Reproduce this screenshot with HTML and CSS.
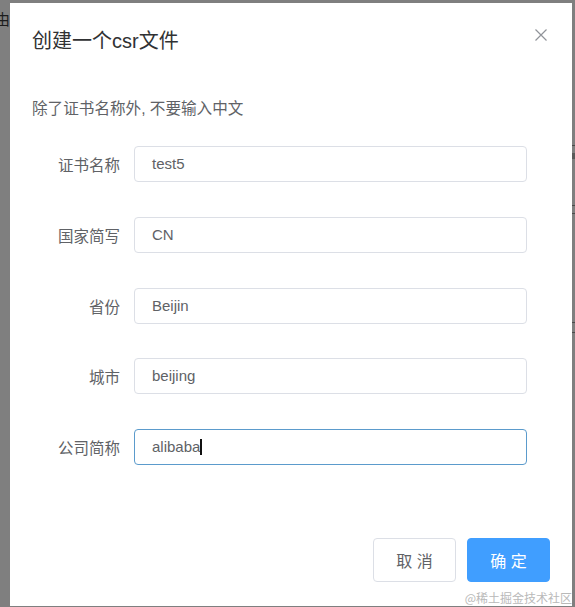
FILE: index.html
```html
<!DOCTYPE html>
<html lang="zh-CN">
<head>
<meta charset="utf-8">
<title>创建一个csr文件</title>
<link rel="stylesheet" href="styles.css">
</head>
<body>
<div class="backdrop-text">由</div>
<div class="bg-marks">
  <span class="mark m1"></span>
  <span class="mark m2"></span>
  <span class="mark m3"></span>
  <span class="mark m4"></span>
  <span class="mark m5"></span>
  <span class="mark m6"></span>
</div>
<div class="dialog">
  <div class="dialog-header">创建一个csr文件</div>
  <svg class="close" width="12" height="12" viewBox="0 0 12 12" aria-label="关闭">
    <path d="M0.5 0.5 L11.5 11.5 M11.5 0.5 L0.5 11.5" stroke="#909399" stroke-width="1.2" fill="none"/>
  </svg>
  <div class="dialog-body">
    <p class="tip">除了证书名称外, 不要输入中文</p>
    <div class="form">
      <div class="row"><label class="label">证书名称</label><div class="input">test5</div></div>
      <div class="row"><label class="label">国家简写</label><div class="input">CN</div></div>
      <div class="row"><label class="label">省份</label><div class="input">Beijin</div></div>
      <div class="row"><label class="label">城市</label><div class="input">beijing</div></div>
      <div class="row"><label class="label">公司简称</label><div class="input focused">alibaba<span class="caret"></span></div></div>
    </div>
  </div>
  <div class="dialog-footer">
    <button class="btn btn-default">取 消</button>
    <button class="btn btn-primary">确 定</button>
  </div>
</div>
<div class="watermark">@稀土掘金技术社区</div>
</body>
</html>
```

FILE: styles.css
```css
html, body {
  margin: 0;
  padding: 0;
}
body {
  background: #7f7f7f;
  width: 575px;
  height: 607px;
  overflow: hidden;
  position: relative;
  font-family: "Liberation Sans", "Noto Sans CJK SC", sans-serif;
  padding-top: 3px;
  box-sizing: border-box;
}
.backdrop-text {
  position: absolute;
  left: -5px;
  top: 10px;
  font-size: 15px;
  line-height: 18px;
  color: #1c1c1c;
  font-family: "Noto Sans CJK SC", sans-serif;
}
.bg-marks .mark {
  position: absolute;
  left: 572px;
  width: 3px;
  height: 1px;
  background: #4a4a4a;
}
.bg-marks .m1 { top: 145px; }
.bg-marks .m2 { top: 153px; height: 6px; background: #5a5a5a; }
.bg-marks .m3 { top: 205px; }
.bg-marks .m4 { top: 213px; }
.bg-marks .m5 { top: 322px; }
.bg-marks .m6 { top: 332px; }

.dialog {
  position: relative;
  width: 562px;
  height: 603px;
  margin-left: 10px;
  background: #fff;
  display: flex;
  flex-direction: column;
  box-sizing: border-box;
}
.dialog-header {
  padding: 26px 22px 0;
  font-size: 20px;
  line-height: 24px;
  color: #303133;
}
.close {
  position: absolute;
  top: 26px;
  right: 25px;
}
.dialog-body {
  padding: 0 0 0 22px;
}
.tip {
  margin: 46px 0 0;
  font-size: 15.6px;
  line-height: 20px;
  color: #606266;
}
.form {
  margin-top: 27px;
  display: flex;
  flex-direction: column;
  gap: 34.75px;
}
.row {
  display: flex;
  align-items: center;
  gap: 14px;
}
.label {
  width: 88px;
  text-align: right;
  font-size: 15.5px;
  color: #606266;
}
.input {
  width: 393px;
  height: 36px;
  box-sizing: border-box;
  border: 1px solid #dcdfe6;
  border-radius: 4px;
  padding-left: 17px;
  font-size: 15px;
  line-height: 34px;
  color: #606266;
  display: flex;
  align-items: center;
}
.input.focused {
  border-color: #5b9bcc;
}
.caret {
  display: inline-block;
  width: 1.5px;
  height: 16px;
  background: #111;
}
.dialog-footer {
  margin-top: auto;
  padding: 0 22px 24px;
  display: flex;
  justify-content: flex-end;
  gap: 11px;
}
.btn {
  width: 83px;
  height: 44px;
  border-radius: 4px;
  font-size: 16px;
  font-family: "Liberation Sans", "Noto Sans CJK SC", sans-serif;
  padding: 0;
  cursor: pointer;
}
.btn-default {
  background: #fff;
  border: 1px solid #dcdfe6;
  color: #606266;
}
.btn-primary {
  background: #409eff;
  border: 1px solid #409eff;
  color: #fff;
}
.watermark {
  position: absolute;
  right: 3px;
  bottom: 2px;
  font-size: 12px;
  line-height: 14px;
  color: #b9b9b9;
  font-family: "Noto Sans CJK SC", serif;
}
```
